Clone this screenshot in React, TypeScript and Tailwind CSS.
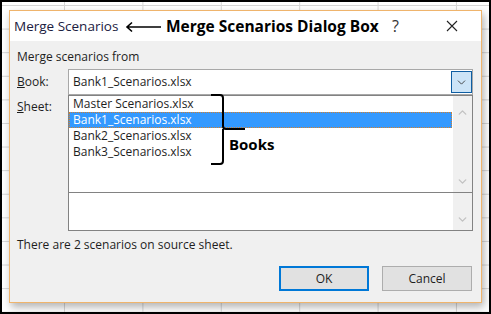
import { ChevronDown, ChevronUp } from 'lucide-react';

const books = ['Master Scenarios.xlsx', 'Bank1_Scenarios.xlsx', 'Bank2_Scenarios.xlsx', 'Bank3_Scenarios.xlsx'];

function Scrollbar({ up, downTop }: { up?: boolean; downTop: number }) {
  return (
    <div className="absolute right-0 top-0 bottom-0 w-[19px] bg-[#f0f0f0]">
      {up && <ChevronUp className="absolute left-[3px] top-[10px] w-[13px] h-[13px] text-[#c2c2c2]" strokeWidth={2.5} />}
      <ChevronDown className="absolute left-[3px] w-[13px] h-[13px] text-[#c2c2c2]" style={{ top: downTop }} strokeWidth={2.5} />
    </div>
  );
}

export default function App() {
  return (
    <div className="relative w-[491px] h-[314px] overflow-hidden border-2 border-black bg-white bg-[linear-gradient(to_right,#d6d6d6_1px,transparent_1px),linear-gradient(to_bottom,#d6d6d6_1px,transparent_1px)] bg-[size:78.4px_23.6px] bg-[position:62px_3px] font-['Open_Sans',sans-serif] text-[12px] text-[#1e1e1e]">
      <div className="pl-[7px] pt-[8px]">
        {/* dialog */}
        <div className="w-[473px] h-[293px] border border-[#efb46c] bg-[#f0f0f0] flex flex-col shadow-[2px_4px_8px_rgba(0,0,0,0.3)]">
          {/* title bar */}
          <div className="h-[30px] bg-white flex items-center pl-[4px] shrink-0">
            <span className="text-[13.5px] text-[#1c2040]">Merge Scenarios</span>
            <span className="ml-auto text-[16px] text-[#333] leading-[20px]">?</span>
            <svg className="ml-[47px] mr-[23px]" width="12" height="12" viewBox="0 0 12 12">
              <path d="M1 1L11 11M11 1L1 11" stroke="#222" strokeWidth="1.1" fill="none" />
            </svg>
          </div>

          {/* body */}
          <div className="relative flex-1 pl-[7px] pr-[8px] pt-[8px] flex flex-col">
            <div className="leading-[16px]">Merge scenarios from</div>

            <div className="mt-[4px] flex items-center h-[26px]">
              <span className="w-[51px]"><u>B</u>ook:</span>
              <div className="relative flex-1 h-[26px] bg-white border border-[#a8a8a8] flex items-center pl-[4px]">
                Bank1_Scenarios.xlsx
                <div className="absolute right-[0px] top-[1px] w-[21px] h-[22px] bg-[#cce4f7] border border-[#0f5ea2] flex items-center justify-center">
                  <ChevronDown className="w-[13px] h-[13px] text-[#333]" strokeWidth={1.6} />
                </div>
              </div>
            </div>

            <div className="mt-[2px] flex">
              <span className="w-[51px] mt-[1px]"><u>S</u>heet:</span>
              <div className="relative flex-1 h-[134px] bg-white border border-[#828282]">
                <Scrollbar downTop={115} />
              </div>
            </div>

            <div className="mt-[6px] leading-[16px]">There are 2 scenarios on source sheet.</div>

            <div className="mt-[13px] flex justify-end gap-[13px] mr-[1px]">
              <button className="w-[90px] h-[25px] bg-[#e1e1e1] border-2 border-[#0078d7] text-[12px]">OK</button>
              <button className="w-[90px] h-[25px] bg-[#e1e1e1] border border-[#adadad] text-[12px]">Cancel</button>
            </div>

            {/* open book dropdown */}
            <div className="absolute left-[58px] top-[54px] w-[405px] h-[98px] bg-white border border-[#828282]">
              {books.map((b, i) => (
                <div
                  key={b}
                  className={
                    i === 1
                      ? 'mr-[20px] h-[16px] leading-[14px] pl-[3px] bg-[#3399ff] text-white border border-dotted border-[#d08030]'
                      : 'h-[16px] leading-[16px] pl-[4px]'
                  }
                >
                  <span>{b}</span>
                </div>
              ))}
              <Scrollbar up downTop={79} />
            </div>
          </div>
        </div>
      </div>

      {/* annotations */}
      <svg className="absolute left-[123px] top-[19px]" width="38" height="12" viewBox="0 0 38 12">
        <path d="M2 6H36M7 1.5L2 6L7 10.5" stroke="#000" strokeWidth="1.6" fill="none" />
      </svg>
      <span className="absolute left-[164px] top-[13px] text-[15.5px] font-bold text-black leading-[22px]">Merge Scenarios Dialog Box</span>

      <svg className="absolute left-[204px] top-[90px]" width="44" height="76" viewBox="0 0 44 76">
        <path d="M5 3H14Q17 3 17 6V34Q17 37 20 37H39M17 37V69Q17 72 14 72H5" stroke="#000" strokeWidth="2" fill="none" />
      </svg>
      <span className="absolute left-[227px] top-[132px] text-[15px] font-bold text-black leading-[20px]">Books</span>
    </div>
  );
}
